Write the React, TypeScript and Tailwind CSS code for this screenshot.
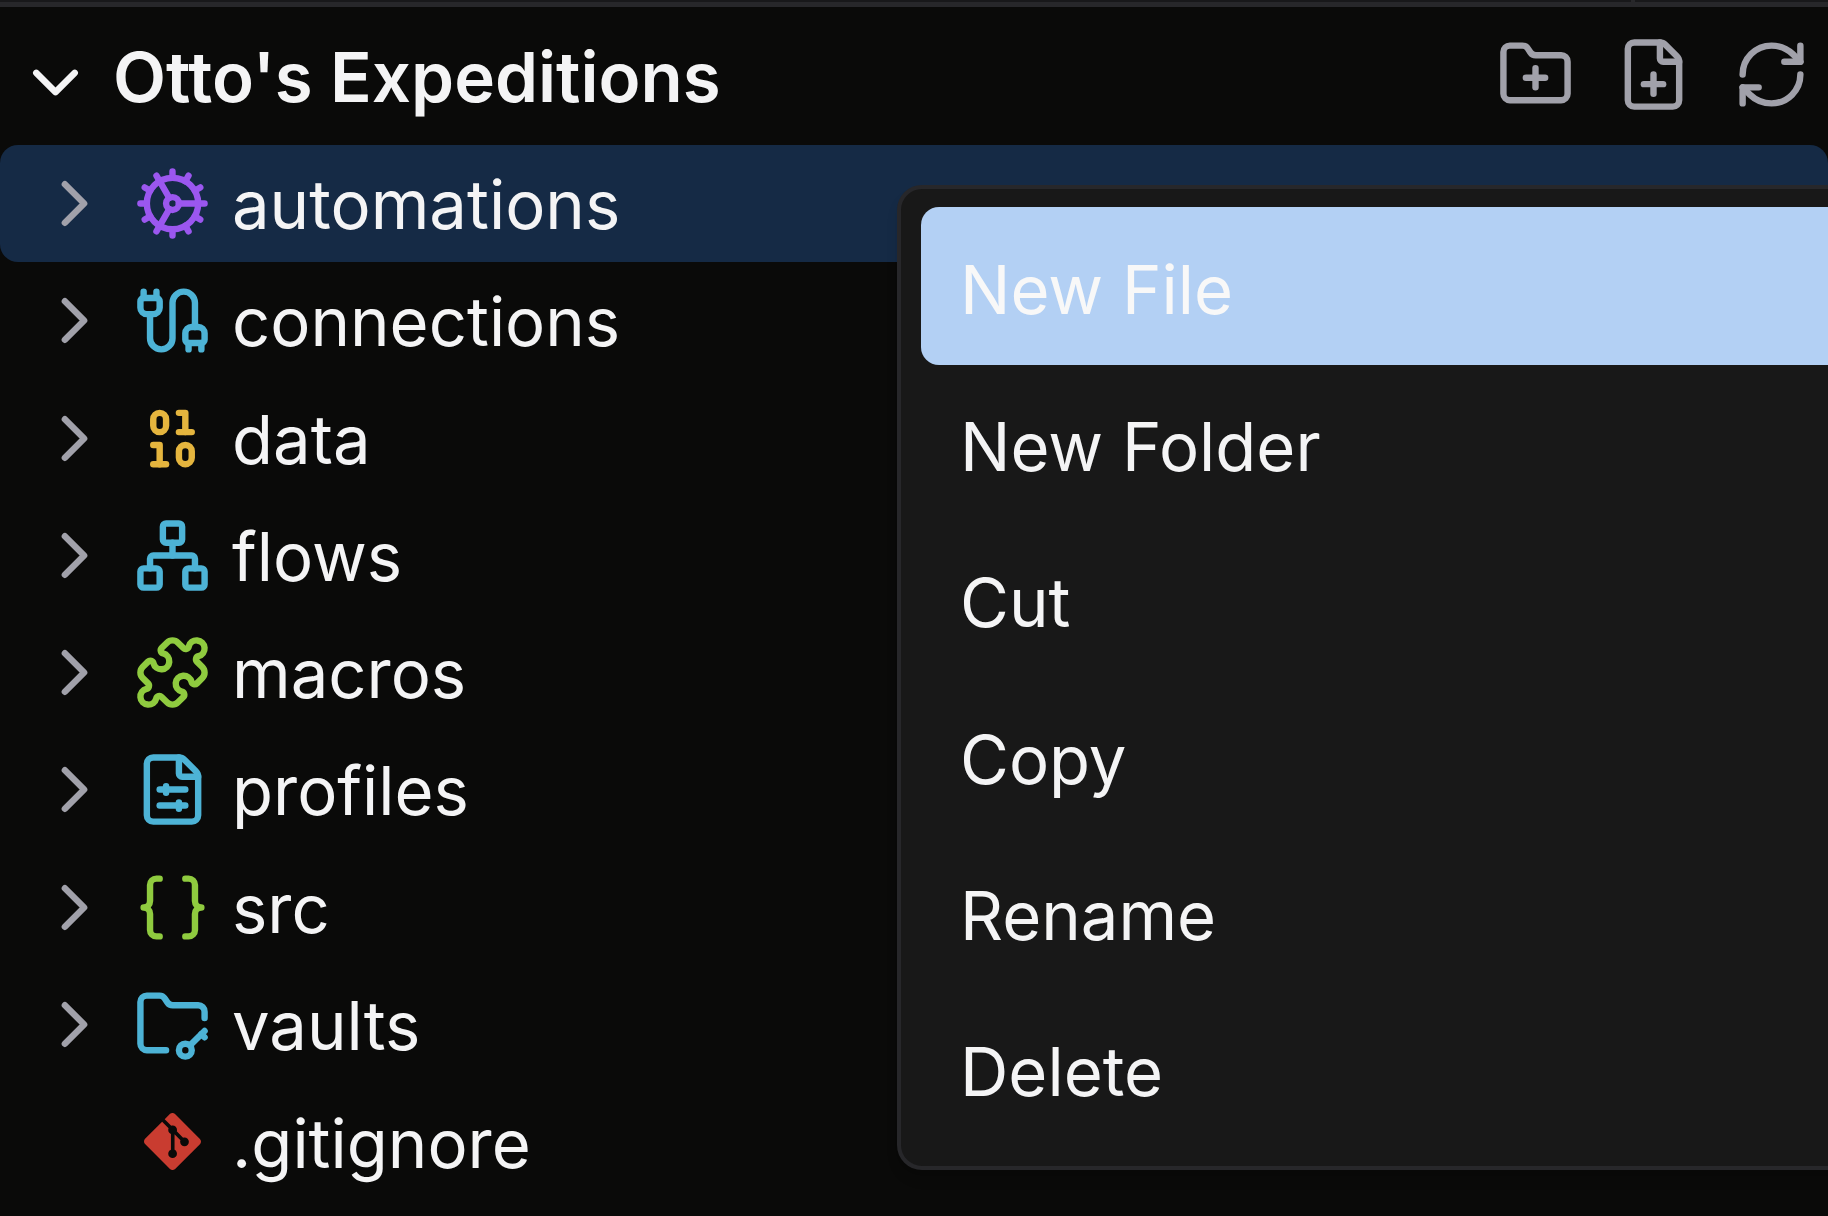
import { Binary, Braces, Cable, ChevronDown, ChevronRight, Cog, FilePlus, FileSliders, FolderKey, FolderPlus, Network, Puzzle, RefreshCw } from "lucide-react";
import { SiGit } from "react-icons/si";

const rows = [
  { name: "automations", Icon: Cog, color: "text-[#9b57ef]", active: true },
  { name: "connections", Icon: Cable, color: "text-[#4db3d6]" },
  { name: "data", Icon: Binary, color: "text-[#e5b53e]" },
  { name: "flows", Icon: Network, color: "text-[#4db3d6]" },
  { name: "macros", Icon: Puzzle, color: "text-[#8fcb3f]" },
  { name: "profiles", Icon: FileSliders, color: "text-[#4db3d6]" },
  { name: "src", Icon: Braces, color: "text-[#8fcb3f]" },
  { name: "vaults", Icon: FolderKey, color: "text-[#4db3d6]" },
];

const menu = ["New File", "New Folder", "Cut", "Copy", "Rename", "Delete"];

export default function App() {
  return (
    <div className="relative h-[1216px] w-[1828px] overflow-hidden bg-[#0a0a09] font-['Inter',sans-serif] text-[#f4f4f5]">
      <div className="relative h-[7px] border-t-2 border-[#18181a] bg-[#27272a]">
        <div className="absolute -top-[2px] left-[1631px] h-[2px] w-[4px] bg-[#27272a]" />
      </div>
      <div className="flex h-[138px] items-center pr-[18px] pl-[17px]">
        <ChevronDown size={77} strokeWidth={2} className="mt-[13px] shrink-0 text-[#f4f4f5]" />
        <span className="ml-[19px] flex-1 pt-[2px] text-[69px] leading-none font-semibold">Otto's Expeditions</span>
        <div className="-mt-[3px] flex gap-[41px] text-[#a1a1aa]">
          <FolderPlus size={77} strokeWidth={2} />
          <FilePlus size={77} strokeWidth={2} />
          <RefreshCw size={77} strokeWidth={2} />
        </div>
      </div>
      <div className="flex flex-col">
        {rows.map(({ name, Icon, color, active }) => (
          <div key={name} className={`flex h-[117.25px] items-center rounded-[18px] pl-[36px] ${active ? "bg-[#152a45]" : ""}`}>
            <ChevronRight size={77} strokeWidth={2} className="shrink-0 text-[#a1a1aa]" />
            <Icon size={77} strokeWidth={2} className={`ml-[21px] shrink-0 ${color}`} />
            <span className="ml-[21px] pt-[2px] text-[67px] leading-none">{name}</span>
          </div>
        ))}
        <div className="flex h-[117.25px] items-center pl-[144px]">
          <SiGit size={57} className="shrink-0 text-[#c93c30]" />
          <span className="ml-[31px] pt-[4px] text-[67px] leading-none">.gitignore</span>
        </div>
      </div>
      <div className="absolute top-[185px] left-[897px] flex h-[985px] w-[1000px] flex-col rounded-[25px] border-4 border-[#27272a] bg-[#181818] px-[20px] pt-[18px] shadow-lg">
        {menu.map((item, i) => (
          <div key={item} className={`flex items-center rounded-[18px] pt-[7px] pl-[39px] text-[67px] leading-none ${i === 0 ? "h-[158px] bg-[#b3d0f4] text-[#f8f8f8]" : "h-[156.3px]"}`}>
            {item}
          </div>
        ))}
      </div>
    </div>
  );
}
